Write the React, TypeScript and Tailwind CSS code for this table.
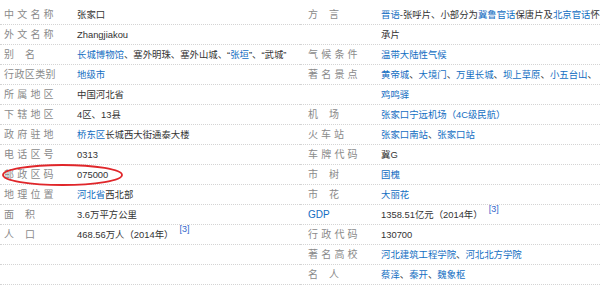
import React from "react";

type Part = string | { link: string };
type Row = { label?: string; value?: Part[]; note?: string; labelLink?: boolean };

const L = (t: string) => ({ link: t });

const leftRows: Row[] = [
  { label: "中文名称", value: ["张家口"] },
  { label: "外文名称", value: ["Zhangjiakou"] },
  { label: "别名", value: [L("长城博物馆"), "、塞外明珠、塞外山城、“", L("张垣"), "”、“武城”"] },
  { label: "行政区类别", value: [L("地级市")] },
  { label: "所属地区", value: ["中国河北省"] },
  { label: "下辖地区", value: ["4区、13县"] },
  { label: "政府驻地", value: [L("桥东区"), "长城西大街通泰大楼"] },
  { label: "电话区号", value: ["0313"] },
  { label: "邮政区码", value: ["075000"] },
  { label: "地理位置", value: [L("河北省"), "西北部"] },
  { label: "面积", value: ["3.6万平方公里"] },
  { label: "人口", value: ["468.56万人（2014年）"], note: "[3]" },
  {},
  {},
];

const rightRows: Row[] = [
  { label: "方言", value: [L("晋语"), "-张呼片、小部分为", L("冀鲁官话"), "保唐片及", L("北京官话"), "怀"] },
  { value: ["承片"] },
  { label: "气候条件", value: [L("温带大陆性气候")] },
  { label: "著名景点", value: [L("黄帝城"), "、", L("大境门"), "、", L("万里长城"), "、", L("坝上草原"), "、", L("小五台山"), "、"] },
  { value: [L("鸡鸣驿")] },
  { label: "机场", value: [L("张家口宁远机场（4C级民航）")] },
  { label: "火车站", value: [L("张家口南站"), "、", L("张家口站")] },
  { label: "车牌代码", value: ["冀G"] },
  { label: "市树", value: [L("国槐")] },
  { label: "市花", value: [L("大丽花")] },
  { label: "GDP", labelLink: true, value: ["1358.51亿元（2014年）"], note: "[3]" },
  { label: "行政代码", value: ["130700"] },
  { label: "著名高校", value: [L("河北建筑工程学院"), "、", L("河北北方学院")] },
  { label: "名人", value: [L("蔡泽"), "、", L("秦开"), "、", L("魏象枢")] },
];

function Label({ text, link }: { text: string; link?: boolean }) {
  if (link) return <span className="text-[10px] text-[#136ec2]">{text}</span>;
  const chars = text.split("");
  const w = chars.length === 2 ? "w-[21px]" : chars.length === 3 ? "w-[13px]" : chars.length === 5 ? "w-[10.4px]" : "w-[13.2px]";
  return (
    <span className="flex text-[10px] text-[#8a8a8a]">
      {chars.map((c, i) => (
        <span key={i} className={`inline-block ${w} shrink-0`}>
          {c}
        </span>
      ))}
    </span>
  );
}

function Column({ rows, pad }: { rows: Row[]; pad: string }) {
  return (
    <div className="w-[300px]">
      {rows.map((r, i) => (
        <div key={i} className={`flex h-[20px] items-center border-b border-dotted border-[#d4d4d4] ${pad}`}>
          <div className="w-[73px] shrink-0">{r.label && <Label text={r.label} link={r.labelLink} />}</div>
          <div className="flex items-center whitespace-nowrap text-[#333]">
            {r.value?.map((p, j) =>
              typeof p === "string" ? (
                <span key={j}>{p}</span>
              ) : (
                <span key={j} className="text-[#136ec2]">
                  {p.link}
                </span>
              )
            )}
            {r.note && <span className="relative -top-[5px] ml-[6px] text-[9px] text-[#3366cc]">{r.note}</span>}
          </div>
        </div>
      ))}
    </div>
  );
}

export default function App() {
  return (
    <div
      className="relative h-[285px] w-[600px] overflow-hidden bg-white pt-[5px] text-[9.4px] leading-none"
      style={{ fontFamily: '"Liberation Sans", "Noto Sans CJK SC", sans-serif' }}
    >
      <div className="flex">
        <Column rows={leftRows} pad="pl-[4px]" />
        <Column rows={rightRows} pad="pl-[8px]" />
      </div>
      <svg className="absolute left-[1px] top-[163px]" width="123" height="24" viewBox="0 0 123 24">
        <ellipse cx="61.5" cy="12" rx="59.5" ry="10" fill="none" stroke="#e0262a" strokeWidth="1.8" />
      </svg>
    </div>
  );
}
